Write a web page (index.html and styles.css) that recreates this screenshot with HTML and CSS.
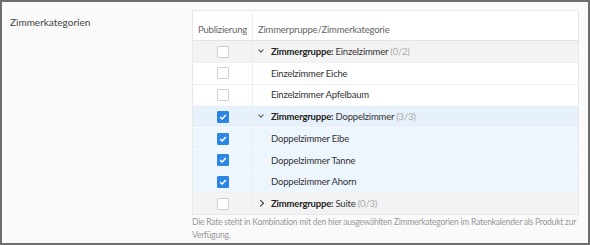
FILE: index.html
```html
<!DOCTYPE html>
<html lang="de">
<head>
  <meta charset="UTF-8">
  <title>Zimmerkategorien</title>
  <link rel="stylesheet" href="styles.css">
</head>
<body>

<div class="field">
  <div class="field-label">Zimmerkategorien</div>
  <div class="field-body">
    <table class="cat-table">
      <thead>
        <tr>
          <th class="col-pub">Publizierung</th>
          <th>Zimmerpruppe/Zimmerkategorie</th>
        </tr>
      </thead>
      <tbody>
        <tr class="group">
          <td class="col-pub"><span class="check"></span></td>
          <td><span class="chev down"></span><b>Zimmergruppe:</b> Einzelzimmer <span class="count">(0/2)</span></td>
        </tr>
        <tr>
          <td class="col-pub"><span class="check"></span></td>
          <td class="child">Einzelzimmer Eiche</td>
        </tr>
        <tr>
          <td class="col-pub"><span class="check"></span></td>
          <td class="child">Einzelzimmer Apfelbaum</td>
        </tr>
        <tr class="group selected">
          <td class="col-pub"><span class="check on"></span></td>
          <td><span class="chev down"></span><b>Zimmergruppe:</b> Doppelzimmer <span class="count">(3/3)</span></td>
        </tr>
        <tr class="selected">
          <td class="col-pub"><span class="check on"></span></td>
          <td class="child">Doppelzimmer Eibe</td>
        </tr>
        <tr class="selected">
          <td class="col-pub"><span class="check on"></span></td>
          <td class="child">Doppelzimmer Tanne</td>
        </tr>
        <tr class="selected">
          <td class="col-pub"><span class="check on"></span></td>
          <td class="child">Doppelzimmer Ahorn</td>
        </tr>
        <tr class="group">
          <td class="col-pub"><span class="check"></span></td>
          <td><span class="chev right"></span><b>Zimmergruppe:</b> Suite <span class="count">(0/3)</span></td>
        </tr>
      </tbody>
    </table>
    <p class="hint">Die Rate steht in Kombination mit den hier ausgewählten Zimmerkategorien im Ratenkalender als Produkt zur Verfügung.</p>
  </div>
</div>

</body>
</html>
```

FILE: styles.css
```css
* {
  box-sizing: border-box;
}

html, body {
  margin: 0;
  height: 100%;
}

body {
  font-family: Lato, "Noto Sans", sans-serif;
  font-size: 9.5px;
  letter-spacing: -0.2px;
  color: #333;
  background: #fafafa;
  border: 2px solid #6e6e6e;
}

.field {
  display: flex;
  padding: 8px 9px 0 8px;
}

.field-label {
  width: 182px;
  padding-top: 6px;
  font-size: 10px;
  letter-spacing: 0;
  color: #444;
}

.field-body {
  width: 387px;
}

.cat-table {
  width: 100%;
  border-collapse: collapse;
  table-layout: fixed;
  background: #fff;
  border: 1px solid #e8e8e8;
}

.cat-table th {
  font-weight: normal;
  color: #666;
  text-align: left;
  padding: 13px 5px 5px;
  border-bottom: 1px solid #e4e4e4;
}

.cat-table td {
  height: 21.75px;
  padding: 0 5px;
  border-top: 1px solid #f0f0f0;
  vertical-align: middle;
}

.cat-table .col-pub {
  width: 60px;
  padding-left: 0;
  padding-right: 0;
  text-align: center;
  border-right: 1px solid #eeeeee;
}

.group td {
  background: #f3f3f3;
}

.selected td {
  background: #edf5fd;
  border-top-color: #f6fafe;
}

.group.selected td {
  background: #e7f1fb;
}

.group b {
  color: #222;
}

.count {
  color: #aaa;
}

.child {
  padding-left: 18px !important;
}

.check {
  display: inline-block;
  width: 12px;
  height: 12px;
  border: 1px solid #d0d0d0;
  border-radius: 1px;
  background: #fff;
  vertical-align: middle;
}

.check.on {
  border-color: #2b87e3;
  background: #2b87e3 url("data:image/svg+xml;utf8,<svg xmlns='http://www.w3.org/2000/svg' viewBox='0 0 12 12'><path d='M2.6 6.2 L5 8.4 L9.4 3.6' fill='none' stroke='white' stroke-width='1.8'/></svg>") center / 10px 10px no-repeat;
}

.chev {
  display: inline-block;
  width: 13px;
  height: 8px;
  position: relative;
}

.chev::before {
  content: "";
  position: absolute;
  width: 3px;
  height: 3px;
  border-right: 1px solid #555;
  border-bottom: 1px solid #555;
}

.chev.down::before {
  left: 1px;
  top: 1px;
  transform: rotate(45deg);
}

.chev.right::before {
  left: 0;
  top: 2px;
  width: 3.5px;
  height: 3.5px;
  border-width: 1.5px;
  border-color: #333;
  transform: rotate(-45deg);
}

.hint {
  margin: 1px 0 0;
  font-size: 8.5px;
  letter-spacing: -0.22px;
  line-height: 13px;
  color: #999;
}
```
